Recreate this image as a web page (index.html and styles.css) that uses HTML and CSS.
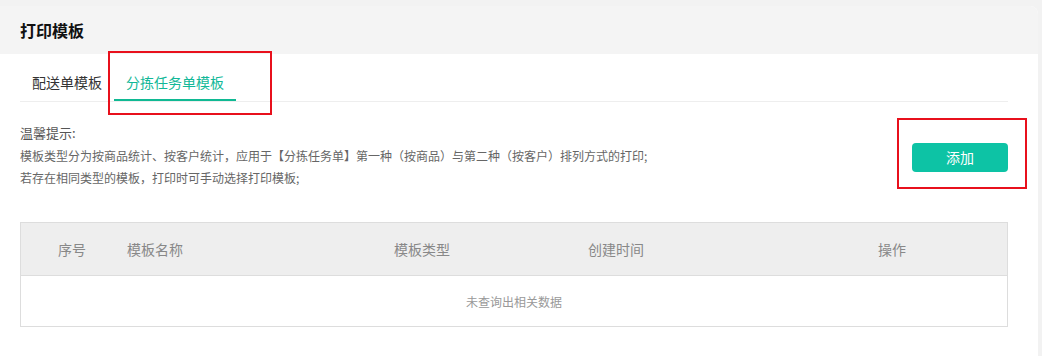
FILE: index.html
```html
<!DOCTYPE html>
<html lang="zh-CN">
<head>
<meta charset="utf-8">
<title>打印模板</title>
<link rel="stylesheet" href="styles.css">
</head>
<body>
<div class="card">
  <div class="card-head"><h1 class="title">打印模板</h1></div>
  <div class="card-body">
    <div class="tabs">
      <div class="tab">配送单模板</div>
      <div class="tab active">分拣任务单模板</div>
      <div class="mark mark-tab"></div>
    </div>
    <div class="tips-row">
      <div class="tips">
        <div class="tips-title">温馨提示:</div>
        <div class="tips-line">模板类型分为按商品统计、按客户统计，应用于【分拣任务单】第一种（按商品）与第二种（按客户）排列方式的打印;</div>
        <div class="tips-line">若存在相同类型的模板，打印时可手动选择打印模板;</div>
      </div>
      <div class="btn-wrap">
        <button class="btn">添加</button>
        <div class="mark mark-btn"></div>
      </div>
    </div>
    <div class="table">
      <div class="thead">
        <div class="th c1">序号</div>
        <div class="th c2">模板名称</div>
        <div class="th c3">模板类型</div>
        <div class="th c4">创建时间</div>
        <div class="th c5">操作</div>
      </div>
      <div class="empty">未查询出相关数据</div>
    </div>
  </div>
</div>
</body>
</html>
```

FILE: styles.css
```css
* { box-sizing: border-box; }
html, body { margin: 0; padding: 0; }
body {
  background: #f2f2f2;
  font-family: "Noto Sans CJK SC", "Noto Sans", sans-serif;
  width: 1042px;
  height: 356px;
  overflow: hidden;
}
.card {
  margin: 6px 4px 0 0;
  background: #fff;
  border-radius: 0 8px 0 0;
  height: 350px;
  overflow: hidden;
}
.card-head {
  height: 48px;
  background: #f4f4f4;
  display: flex;
  align-items: center;
  padding-left: 20px;
}
.title {
  margin: 0;
  font-size: 16px;
  font-weight: 700;
  color: #111;
  line-height: 20px;
}
.card-body {
  padding: 0 30px 0 20px;
}
.tabs {
  position: relative;
  display: flex;
  height: 48px;
  border-bottom: 1px solid #eeeeee;
}
.tab {
  position: relative;
  padding: 0 12px;
  font-size: 14px;
  color: #333;
  line-height: 20px;
  padding-top: 18px;
}
.tab.active {
  color: #12b898;
}
.tab.active::after {
  content: "";
  position: absolute;
  left: 0;
  right: 0;
  bottom: 0;
  height: 2px;
  background: #10b993;
}
.mark {
  position: absolute;
  border: 2px solid #e8101c;
  pointer-events: none;
}
.mark-tab {
  left: 88px;
  top: -3px;
  width: 164px;
  height: 64px;
}
.tips-row {
  display: flex;
  justify-content: space-between;
  padding-top: 22px;
}
.tips-title {
  font-size: 13px;
  color: #555;
  line-height: 18px;
  margin-bottom: 3px;
}
.tips-line {
  font-size: 12px;
  color: #666;
  line-height: 22px;
}
.btn-wrap {
  position: relative;
  padding-top: 19px;
}
.btn {
  display: block;
  width: 96px;
  height: 29px;
  border: 0;
  border-radius: 4px;
  background: #0dc3a5;
  color: #fff;
  font-family: inherit;
  font-size: 14px;
  line-height: 29px;
  padding: 0;
}
.mark-btn {
  left: -15px;
  top: -6px;
  width: 130px;
  height: 71px;
}
.table {
  margin-top: 33px;
  border: 1px solid #dddddd;
}
.thead {
  display: grid;
  grid-template-columns: 106px 267px 194px 290px 1fr;
  height: 53px;
  background: #eeeeee;
  border-bottom: 1px solid #dddddd;
  align-items: center;
}
.th {
  font-size: 14px;
  color: #888;
  line-height: 20px;
}
.c1 { padding-left: 37px; }
.empty {
  height: 50px;
  display: flex;
  align-items: center;
  justify-content: center;
  font-size: 12px;
  color: #999;
}
```
